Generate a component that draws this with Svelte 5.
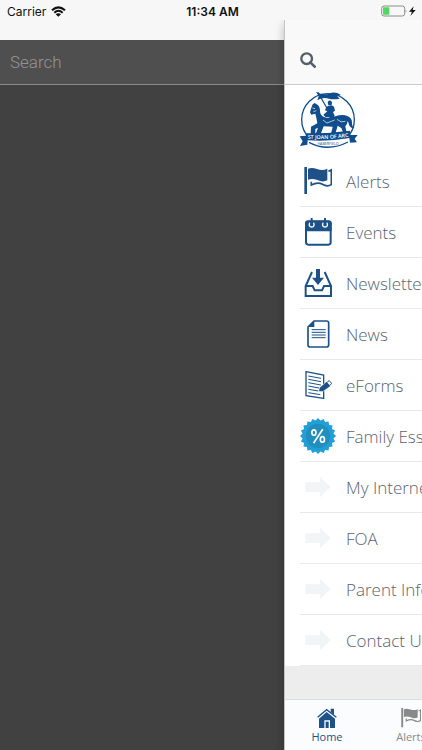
<script>
	let query = $state('');

	const items = [
		{ icon: 'flag', name: 'Alerts' },
		{ icon: 'calendar', name: 'Events' },
		{ icon: 'inbox', name: 'Newsletters' },
		{ icon: 'page', name: 'News' },
		{ icon: 'form', name: 'eForms' },
		{ icon: 'badge', name: 'Family Essentials' },
		{ icon: 'arrow', name: 'My Internet' },
		{ icon: 'arrow', name: 'FOA' },
		{ icon: 'arrow', name: 'Parent Info' },
		{ icon: 'arrow', name: 'Contact Us' }
	];

	// scalloped edge of the discount badge
	const teeth = 20;
	const badgePoints = Array.from({ length: teeth * 2 }, (_, i) => {
		const r = i % 2 ? 46 : 53;
		const a = (Math.PI * i) / teeth;
		return `${(53 + r * Math.sin(a)).toFixed(1)},${(53 - r * Math.cos(a)).toFixed(1)}`;
	}).join(' ');
</script>

{#snippet flag()}
	<path d="M1 0h8v81H1z" fill="currentColor" />
	<path d="M12 5Q23 0 39 6Q56 12 70 5V40Q56 47 40 39Q25 33 12 38z" fill="currentColor" />
	<path d="M73 12Q78 12 82 9V53Q70 61 55 52Q42 44 22 54V44" fill="none" stroke="currentColor" stroke-width="5" />
{/snippet}

<div class="screen">
	<header class="status">
		<span class="carrier">
			Carrier
			<svg width="15" height="11" viewBox="0 0 45 33" aria-hidden="true">
				<path d="M3 13Q22 -5 42 13M10 20Q22 9 35 20" fill="none" stroke="#111" stroke-width="6" />
				<path d="M22 32L14 25Q22 18 30 25z" fill="#111" />
			</svg>
		</span>
		<strong>11:34 AM</strong>
		<span class="power">
			<svg width="37" height="12" viewBox="0 0 111 36" aria-hidden="true">
				<rect x="2" y="3" width="69" height="30" rx="7" fill="none" stroke="#8c8c8c" stroke-width="3" />
				<rect x="6" y="7" width="19" height="22" rx="2" fill="#4cd964" />
				<path d="M74 13Q79 18 74 24z" fill="#8c8c8c" />
				<path d="M98 4L84 20H93L88 33L104 15H95z" fill="#111" />
			</svg>
		</span>
	</header>

	<main>
		<aside class="drawer">
			<label class="search">
				<input type="text" placeholder="Search" aria-label="Search" bind:value={query} />
			</label>
		</aside>

		<section class="panel">
			<div class="toolbar">
				<button class="find" aria-label="Search">
					<svg width="16" height="16" viewBox="0 0 48 48" aria-hidden="true">
						<circle cx="20" cy="20" r="16" fill="none" stroke="#52606b" stroke-width="7" />
						<path d="M31 31L44 44" stroke="#52606b" stroke-width="8" stroke-linecap="round" />
					</svg>
				</button>
			</div>

			<div class="content">
				<div class="logo">
					<svg width="62" height="57" viewBox="48 20 186 171" role="img" aria-label="St Joan of Arc Haberfield">
						<ellipse cx="138" cy="106" rx="79" ry="78" fill="#fff" stroke="#104d8c" stroke-width="4" />
						<g fill="#104d8c">
							<!-- banner -->
							<path d="M102 22Q122 33 142 28Q158 20 177 32L166 36L173 43Q154 47 141 43Q122 38 106 48L110 36z" />
							<path d="M106 25L109 23L143 82L140 84z" />
							<!-- rider -->
							<path d="M137 54Q139 46 147 49Q152 53 149 62H139z" />
							<path d="M133 68Q145 58 156 67L159 79L153 83L158 94L152 110L139 109L143 99L130 98L124 91L136 81L129 78z" />
							<!-- horse -->
							<path d="M92 60L98 56L104 60Q114 65 114 80Q114 92 126 98Q143 104 160 96Q181 88 196 95Q211 101 210 116Q210 128 218 131Q202 134 200 117L197 110Q196 121 190 126L193 141L201 149H185L178 131L167 124L160 148H147L152 127L125 126L116 149H101L108 130L100 134V149H86L87 127L106 117L103 100L100 88L88 91L84 84L88 70z" />
						</g>
						<path d="M91 71L99 73M94 82L103 79M123 107L135 116L158 107M165 105Q177 117 190 111" fill="none" stroke="#fff" stroke-width="2" />
						<!-- ribbon -->
						<path d="M79 158Q136 190 199 158V173Q137 207 79 174z" fill="#fff" />
						<path d="M81 174Q137 204 198 173" fill="none" stroke="#104d8c" stroke-width="4" />
						<path d="M53 156L72 154V147Q137 148 204 139V152L227 152L218 163L225 174L204 175L202 161Q137 173 77 168L76 181L54 185L62 171z" fill="#104d8c" />
						<path id="ribbon" d="M77 163Q138 167 202 157" fill="none" />
						<text class="ribbon-text"><textPath href="#ribbon">ST JOAN OF ARC</textPath></text>
						<text class="suburb" x="138" y="181" text-anchor="middle">HABERFIELD</text>
					</svg>
				</div>

				<ul>
					{#each items as item}
						<li>
							<a href="#menu">
								<span class="icon">
									{#if item.icon === 'flag'}
										<svg width="28" height="28" viewBox="0 0 84 84">{@render flag()}</svg>
									{:else if item.icon === 'calendar'}
										<svg width="28" height="28" viewBox="0 0 84 84">
											<rect x="6" y="10" width="74" height="70" rx="7" fill="#fff" stroke="currentColor" stroke-width="6" />
											<path d="M3 16Q3 8 11 8H75Q83 8 83 16V40H3z" fill="currentColor" />
											<path d="M17 14Q13 27 23 27Q33 27 29 14M57 14Q53 27 63 27Q73 27 69 14" fill="none" stroke="#fff" stroke-width="4" />
											<path d="M23 2V19M63 2V19" stroke="currentColor" stroke-width="6" stroke-linecap="round" />
										</svg>
									{:else if item.icon === 'inbox'}
										<svg width="28" height="28" viewBox="0 0 84 84">
											<path d="M24 9L5 51V81H81V51L62 9M5 51H26L32 64H54L60 51H81" fill="none" stroke="currentColor" stroke-width="6" />
											<path d="M36 0H48V26H60L42 48L24 26H36z" fill="currentColor" />
										</svg>
									{:else if item.icon === 'page'}
										<svg width="28" height="28" viewBox="0 0 84 84">
											<path d="M30 3H68Q74 3 74 9V75Q74 81 68 81H18Q12 81 12 75V21z" fill="none" stroke="currentColor" stroke-width="5" />
											<path d="M31 3V21H12z" fill="currentColor" />
											<path d="M23 29H65M23 37H65M23 45H65M23 53H65" stroke="currentColor" stroke-width="3" />
										</svg>
									{:else if item.icon === 'form'}
										<svg width="28" height="28" viewBox="0 0 84 84">
											<path d="M59 38V12L6 2V74L59 82V61" fill="none" stroke="currentColor" stroke-width="4" />
											<path d="M13 15L51 22M13 25L51 32M13 35L51 42M13 45L45 51M13 55L43 60M13 65L49 71" stroke="currentColor" stroke-width="3" />
											<path d="M47 50L68 32L79 45L57 61L45 61z" fill="currentColor" />
											<path d="M70 33L76 29L83 37L78 43" fill="none" stroke="currentColor" stroke-width="3" />
										</svg>
									{:else if item.icon === 'badge'}
										<svg width="36" height="36" viewBox="0 0 106 106">
											<polygon points={badgePoints} fill="#249ed7" />
											<circle cx="53" cy="53" r="36" fill="#218fbe" />
											<ellipse cx="41" cy="43" rx="6" ry="8" fill="none" stroke="#fff" stroke-width="5" />
											<ellipse cx="66" cy="63" rx="6" ry="8" fill="none" stroke="#fff" stroke-width="5" />
											<path d="M67 33L40 74" stroke="#fff" stroke-width="5" />
										</svg>
									{:else}
										<svg width="28" height="28" viewBox="0 0 84 84">
											<path d="M4 28H48V11L80 42L48 73V57H4z" fill="#f3f4f6" />
										</svg>
									{/if}
								</span>
								<span>{item.name}</span>
							</a>
						</li>
					{/each}
				</ul>
			</div>

			<nav class="tabs">
				<a href="#home" class="active">
					<svg width="20" height="20" viewBox="0 0 60 60" aria-hidden="true">
						<path d="M2 28L29 5L58 28" fill="none" stroke="currentColor" stroke-width="4" />
						<path d="M41 2H51V20L41 12z" fill="currentColor" />
						<path d="M29 12L54 32V60H39V37H22V60H6V32z" fill="currentColor" />
						<path d="M26 41H35V60H26z" fill="currentColor" />
					</svg>
					Home
				</a>
				<a href="#alerts">
					<svg width="20" height="20" viewBox="0 0 84 84" aria-hidden="true">{@render flag()}</svg>
					Alerts
				</a>
			</nav>
		</section>
	</main>
</div>

<style>
	:global(body) {
		background: #f7f7f7;
	}

	.screen {
		display: flex;
		flex-direction: column;
		min-height: 100vh;
		overflow: hidden;
		font-family: "Open Sans", sans-serif;
	}

	svg {
		display: block;
	}

	.status {
		position: relative;
		z-index: 2;
		display: grid;
		grid-template-columns: 1fr auto 1fr;
		align-items: center;
		height: 20px;
		padding: 2px 4px 0 7px;
		box-sizing: border-box;
		background: #f7f7f7;
		color: #111;
		font: 12px Inter, sans-serif;
	}

	.status strong {
		font-weight: 600;
	}

	.carrier {
		display: flex;
		align-items: center;
		gap: 5px;
	}

	.power {
		justify-self: end;
	}

	main {
		display: flex;
		flex: 1;
	}

	.drawer {
		flex: 0 0 285px;
		margin-top: 20px;
		background: #414141;
	}

	.search {
		display: block;
		background: #4f4f4f;
		border-bottom: 1px solid #8a8c8a;
	}

	.search input {
		display: block;
		width: 100%;
		height: 44px;
		padding: 0 10px;
		box-sizing: border-box;
		border: 0;
		outline: 0;
		background: none;
		color: #fff;
		font: 300 17px Roboto, sans-serif;
	}

	.search input::placeholder {
		color: #939393;
		opacity: 1;
	}

	.panel {
		position: relative;
		display: flex;
		flex: 1;
		flex-direction: column;
		min-width: 0;
		overflow: hidden;
		background: #ededed;
		box-shadow: -1px 0 0 #c4c4c4, 0 4px 10px rgba(0, 0, 0, 0.3);
	}

	.toolbar {
		display: flex;
		align-items: center;
		height: 65px;
		padding: 16px 15px 0;
		box-sizing: border-box;
		background: #f9f9f9;
		border-bottom: 1px solid #ccc;
	}

	.find {
		padding: 0;
		border: 0;
		background: none;
	}

	.content {
		background: #fff;
	}

	.logo {
		height: 71px;
		padding: 6px 13px 0;
		box-sizing: border-box;
	}

	.ribbon-text {
		fill: #fff;
		font: 600 16px "Open Sans", sans-serif;
	}

	.suburb {
		fill: #104d8c;
		font: 11px "Open Sans", sans-serif;
	}

	ul {
		margin: 0;
		padding: 0 0 0 15px;
		list-style: none;
	}

	li a {
		display: flex;
		align-items: center;
		gap: 10px;
		height: 50px;
		border-bottom: 1px solid #e9e9ed;
		color: #5b6470;
		font-size: 17px;
		font-weight: 300;
		text-decoration: none;
		white-space: nowrap;
	}

	.icon {
		display: flex;
		flex: 0 0 36px;
		justify-content: center;
		color: #1d5188;
	}

	.tabs {
		display: flex;
		height: 51px;
		box-sizing: border-box;
		margin-top: auto;
		background: #fafcfd;
		border-top: 1px solid #dcdcdc;
	}

	.tabs a {
		display: flex;
		flex: 0 0 84px;
		flex-direction: column;
		align-items: center;
		gap: 1px;
		padding-top: 8px;
		box-sizing: border-box;
		color: #8a8a8a;
		font-size: 11px;
		line-height: 16px;
		text-decoration: none;
	}

	.tabs .active {
		color: #1d5188;
	}
</style>
